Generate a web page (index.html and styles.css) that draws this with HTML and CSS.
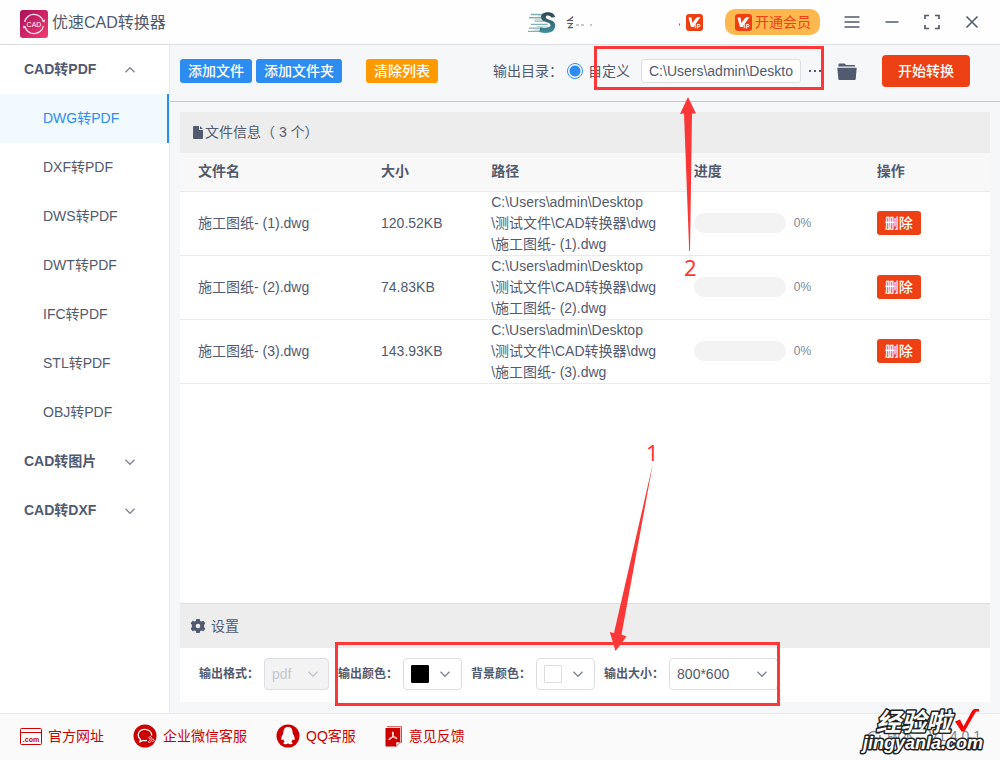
FILE: index.html
```html
<!DOCTYPE html>
<html lang="zh-CN">
<head>
<meta charset="utf-8">
<title>优速CAD转换器</title>
<link rel="stylesheet" href="styles.css">
</head>
<body>
<svg class="defs" aria-hidden="true">
  <defs>
    <symbol id="chevron-down" viewBox="0 0 12 12"><path d="M1.500 3.800 6 8.300l4.500-4.500" fill="none" stroke="currentColor" stroke-width="1.400"/></symbol>
    <symbol id="chevron-up" viewBox="0 0 12 12"><path d="M1.500 8.300 6 3.800l4.500 4.500" fill="none" stroke="currentColor" stroke-width="1.400"/></symbol>
    <symbol id="vip" viewBox="0 0 17 17"><rect width="17" height="17" rx="3" fill="#ee3f12"/><path d="M2.500 3.500h3l.8 5.500L10.500 3.500l4-.5L7.500 13H5z" fill="#fff"/><path d="M9.200 10.200v4M11.300 14.500v-4h1.600a1.100 1.100 0 0 1 0 2.300h-1.400" fill="none" stroke="#fff" stroke-width="1"/></symbol>
  </defs>
</svg>

<header class="titlebar">
  <svg class="logo" viewBox="0 0 28 28" aria-hidden="true">
    <defs><linearGradient id="lg" x1="0" y1="0" x2="1" y2="1"><stop offset="0" stop-color="#a9105a"/><stop offset="1" stop-color="#f33b71"/></linearGradient></defs>
    <rect width="28" height="28" rx="3" fill="url(#lg)"/>
    <path d="M4.600 12A9.500 9.500 0 0 1 23 11M23.400 16A9.500 9.500 0 0 1 5 17" fill="none" stroke="#fff" stroke-opacity=".9" stroke-width="1.300"/>
    <path d="m21.800 11 2.800 1.500.2-3zM6.200 17l-2.800-1.500-.2 3z" fill="#fff"/>
    <text x="14" y="17" class="logo-text">CAD</text>
  </svg>
  <h1 class="app-name">优速CAD转换器</h1>
  <div class="account">
    <svg class="avatar" viewBox="0 0 32 24" aria-hidden="true">
      <defs><linearGradient id="ag" x1="0" y1="0" x2="0" y2="1"><stop offset="0" stop-color="#2b4550"/><stop offset="1" stop-color="#3f929c"/></linearGradient></defs>
      <path d="M3 3.500h14M1 7h14M7 10.500h10M3 14h18M1 18h15M0 21.500h24" stroke="#83afb5" stroke-width="1.500"/>
      <path d="M10 5h7M7 8.500h8M9 16h12M6 20h14" stroke="#b9ced2" stroke-width="1"/>
      <path d="M29 6C27-1 14 0 14 6c0 7 10 4 10 9 0 3-7 3-11 2l-1 5c7 2 17 2 17-7 0-7-10-5-10-9 0-2 5-2 6 1z" fill="url(#ag)"/>
    </svg>
    <span class="member">会</span>
    <svg class="member-rest" viewBox="0 0 108 16" aria-hidden="true"><path d="M3 11h3M8 11h3M17 11h2" stroke="#8a91a0" stroke-width="1"/><path d="M106.500 9.500v2" stroke="#697183"/></svg>
    <svg class="vip" aria-hidden="true"><use href="#vip"/></svg>
  </div>
  <button class="open-vip" type="button"><svg class="vip" aria-hidden="true"><use href="#vip"/></svg>开通会员</button>
  <div class="window-controls">
    <button type="button" aria-label="菜单"><svg viewBox="0 0 16 16"><path d="M.5 3h15M.5 8h15M.5 13h15" stroke="currentColor" stroke-width="1.500"/></svg></button>
    <button type="button" aria-label="最小化"><svg viewBox="0 0 16 16"><path d="M1.500 8h13" stroke="currentColor" stroke-width="1.500"/></svg></button>
    <button type="button" aria-label="最大化"><svg viewBox="0 0 16 16"><path d="M1 5V1.500h4M11 1.500h4V5M15 11v3.500h-4M5 14.500H1V11" fill="none" stroke="currentColor" stroke-width="1.700"/></svg></button>
    <button type="button" aria-label="关闭"><svg viewBox="0 0 16 16"><path d="m2.500 2.500 11 11m0-11-11 11" stroke="currentColor" stroke-width="1.600"/></svg></button>
  </div>
</header>

<div class="body">
  <nav class="sidebar">
    <button class="group" type="button" aria-expanded="true">CAD转PDF<svg class="chevron" aria-hidden="true"><use href="#chevron-up"/></svg></button>
    <a class="item active" href="#dwg">DWG转PDF</a>
    <a class="item" href="#dxf">DXF转PDF</a>
    <a class="item" href="#dws">DWS转PDF</a>
    <a class="item" href="#dwt">DWT转PDF</a>
    <a class="item" href="#ifc">IFC转PDF</a>
    <a class="item" href="#stl">STL转PDF</a>
    <a class="item" href="#obj">OBJ转PDF</a>
    <button class="group" type="button" aria-expanded="false">CAD转图片<svg class="chevron" aria-hidden="true"><use href="#chevron-down"/></svg></button>
    <button class="group" type="button" aria-expanded="false">CAD转DXF<svg class="chevron" aria-hidden="true"><use href="#chevron-down"/></svg></button>
  </nav>

  <main class="main">
    <div class="toolbar">
      <div class="file-actions">
        <button class="btn primary" type="button">添加文件</button>
        <button class="btn primary" type="button">添加文件夹</button>
        <button class="btn warning" type="button">清除列表</button>
      </div>
      <div class="output">
        <span>输出目录：</span>
        <label class="radio"><input type="radio" name="dir" checked>自定义</label>
        <input class="path-input" type="text" aria-label="输出目录" value="C:\Users\admin\Deskto">
        <button class="icon-btn dots" type="button" aria-label="浏览"><svg viewBox="0 0 14 4"><path d="M0 1h2v2H0zM5 1h2v2H5zM10 1h2v2h-2z" fill="currentColor"/></svg></button>
        <button class="icon-btn folder" type="button" aria-label="打开文件夹"><svg viewBox="0 0 20 17"><path d="M1.500 3V1.500Q1.500.5 2.500.5h5l1.500 1.500h8q1 0 1 1v.5h-16.500z" fill="#515a6e"/><path d="M.3 4.700h19.400l-1 11.300q0 1-1 1H2.300q-1 0-1-1z" fill="#515a6e"/></svg></button>
        <button class="btn start" type="button">开始转换</button>
      </div>
    </div>

    <div class="panel">
      <div class="panel-title files-title">
        <svg class="doc-icon" viewBox="0 0 10 13" aria-hidden="true"><path d="M1 0h5v4h4v8q0 1-1 1H1q-1 0-1-1V1q0-1 1-1zM7 0l3 3H7z" fill="#515a6e"/></svg>
        <span>文件信息（ 3 个）</span>
      </div>
      <table class="files">
        <colgroup><col class="c-name"><col class="c-size"><col class="c-path"><col class="c-progress"><col class="c-action"></colgroup>
        <thead><tr><th>文件名</th><th>大小</th><th>路径</th><th>进度</th><th>操作</th></tr></thead>
        <tbody>
          <tr><td>施工图纸- (1).dwg</td><td>120.52KB</td><td>C:\Users\admin\Desktop<br>\测试文件\CAD转换器\dwg<br>\施工图纸- (1).dwg</td><td><div class="progress"><span class="track"></span><span>0%</span></div></td><td><button class="btn delete" type="button">删除</button></td></tr>
          <tr><td>施工图纸- (2).dwg</td><td>74.83KB</td><td>C:\Users\admin\Desktop<br>\测试文件\CAD转换器\dwg<br>\施工图纸- (2).dwg</td><td><div class="progress"><span class="track"></span><span>0%</span></div></td><td><button class="btn delete" type="button">删除</button></td></tr>
          <tr><td>施工图纸- (3).dwg</td><td>143.93KB</td><td>C:\Users\admin\Desktop<br>\测试文件\CAD转换器\dwg<br>\施工图纸- (3).dwg</td><td><div class="progress"><span class="track"></span><span>0%</span></div></td><td><button class="btn delete" type="button">删除</button></td></tr>
        </tbody>
      </table>
      <section class="settings">
        <div class="panel-title settings-title">
          <svg class="gear" viewBox="0 0 16 16" aria-hidden="true"><path fill-rule="evenodd" d="M6.300 1h3.400l.5 2 1.200.6 2-.9 1.900 2.500-1.200 1.700v2.200l1.200 1.700-1.900 2.500-2-.9-1.200.6-.5 2H6.300l-.5-2-1.200-.6-2 .9-1.900-2.500 1.200-1.700V6.900L.7 5.200l1.900-2.500 2 .9L5.800 3zM8 5.700a2.300 2.300 0 1 0 0 4.600 2.300 2.300 0 0 0 0-4.600z" fill="#515a6e"/></svg>
          <span>设置</span>
        </div>
        <div class="settings-row">
          <div class="field"><label for="format">输出格式：</label><span class="select format"><select id="format" disabled><option>pdf</option></select><svg class="chevron" aria-hidden="true"><use href="#chevron-down"/></svg></span></div>
          <div class="field"><label for="fg">输出颜色：</label><button id="fg" class="picker" type="button"><span class="swatch black"></span><svg class="chevron" aria-hidden="true"><use href="#chevron-down"/></svg></button></div>
          <div class="field"><label for="bg">背景颜色：</label><button id="bg" class="picker" type="button"><span class="swatch white"></span><svg class="chevron" aria-hidden="true"><use href="#chevron-down"/></svg></button></div>
          <div class="field"><label for="size">输出大小：</label><span class="select size"><select id="size"><option>800*600</option></select><svg class="chevron" aria-hidden="true"><use href="#chevron-down"/></svg></span></div>
        </div>
      </section>
    </div>
  </main>
</div>

<footer class="footer">
  <a href="#site"><svg class="site-icon" viewBox="0 0 22 17" aria-hidden="true"><rect x=".5" y=".5" width="21" height="16" rx="1" fill="none" stroke="#c00"/><path d="M1 4.500h20" stroke="#c00"/><text x="11" y="13.500" class="com">.com</text></svg>官方网址</a>
  <a href="#wechat"><svg class="round-icon" viewBox="0 0 24 24" aria-hidden="true"><circle cx="12" cy="12" r="11.500" fill="#c00"/><path d="M18.700 11.500C18.700 3.500 5.200 3.500 5.200 11c0 2 1 3.500 2.200 4.300L7 17.800l2.800-1.400q2 .6 4.200 0" fill="none" stroke="#fff" stroke-width="1.300"/><path d="m17.200 12.300 1.500 1.500-1.500 1.500-1.500-1.500zM19.800 14.800l1.500 1.500-1.500 1.500-1.500-1.500zM16.500 16.500l1.200 1.200-1.200 1.200-1.200-1.200z" fill="none" stroke="#fff" stroke-width=".9"/></svg>企业微信客服</a>
  <a href="#qq"><svg class="round-icon" viewBox="0 0 24 24" aria-hidden="true"><circle cx="12" cy="12" r="11.500" fill="#c00"/><path d="M12 3C8.500 3 7.300 5.700 7.300 9.500 6 11.500 5 13.800 5.300 15.500c.2 1 1.200.7 1.900-.4.300 1.300.8 2.100 1.500 2.800-1.700.6-1.700 2 .3 2.300 1.300.2 2.300-.2 3-.9.700.7 1.700 1.100 3 .9 2-.3 2-1.700.3-2.300.7-.7 1.200-1.500 1.500-2.800.7 1.100 1.700 1.400 1.900.4.300-1.700-.7-4-2-6C16.700 5.700 15.500 3 12 3z" fill="#fff"/></svg>QQ客服</a>
  <a href="#feedback"><svg class="pdf-icon" viewBox="0 0 18 21" aria-hidden="true"><path d="M2 .7h14.500V17" fill="none" stroke="#dd4b4b" stroke-width="1"/><path d="M1 2h14.300v14L11 20.500H1q-.5 0-.5-.5V2.500z" fill="#c00"/><path d="M11 20.500V16h4.500z" fill="#fff" stroke="#c00" stroke-width=".6"/><path d="M7.500 6c1.500-.3 1 2.800 0 4.500-1 1.800-2.500 3.500-3.700 3 .2-1.500 3-2.500 5-2.500 2 0 3.500.8 3 1.700-2 .3-5-3.500-4.300-6.700z" fill="none" stroke="#fff" stroke-width="1"/></svg>意见反馈</a>
  <div class="version"><svg viewBox="0 0 16 16" aria-hidden="true"><path d="M2 9a6 6 0 0 1 10-4M14 7a6 6 0 0 1-10 5" fill="none" stroke="currentColor" stroke-width="1.500"/><path d="m9 5.500 5 .5-1-4z" fill="currentColor"/></svg><span>版本：V1.4.0.1</span></div>
</footer>

<div class="markup box-path"></div>
<div class="markup box-size"></div>
<svg class="arrows" viewBox="0 0 1000 760" aria-hidden="true">
  <path d="M688 97l8 16.500h-4L690 251h-.8L684 113.500l-4 .5z"/>
  <path d="M653 463 621.500 634.500l5 2L615.500 651 609.800 632l4.200 1z"/>
  <text x="646" y="461">1</text>
  <text x="684" y="276">2</text>
</svg>
<svg class="watermark" viewBox="0 0 126 50" aria-hidden="true">
  <text x="16" y="25" class="wm-cn">经验啦</text>
  <text x="63" y="43" class="wm-en">jingyanla.com</text>
  <path d="M95 15.500 100 13.500l3.500 7L112 5q1-2 3-2h4v2.500h-3l-11.500 20h-3z" fill="#f00"/>
</svg>
</body>
</html>
```

FILE: styles.css
```css
* { box-sizing: border-box; }

body {
  position: relative;
  display: flex;
  flex-direction: column;
  min-height: 100vh;
  margin: 0;
  background: #f5f7f9;
  color: #515a6e;
  font: 14px/21px "Liberation Sans", "Noto Sans CJK SC", sans-serif;
}

button, input, select { margin: 0; font: inherit; color: inherit; }
button { padding: 0; border: 0; background: none; cursor: pointer; }
a { color: inherit; text-decoration: none; }
svg { display: block; flex: none; }
.defs { position: absolute; width: 0; height: 0; }
.chevron { width: 12px; height: 12px; color: #808695; }

.titlebar {
  display: flex;
  align-items: center;
  height: 45px;
  padding: 0 8px 0 20px;
  border-bottom: 1px solid #dcdde0;
  background: #fefefe;
}
.logo { width: 28px; height: 28px; margin-top: 3px; }
.logo-text { fill: #fff; font-size: 7px; text-anchor: middle; }
.app-name { margin: 0 auto 0 4px; font-size: 16px; font-weight: 400; }
.account { display: flex; align-items: center; margin-right: 22px; }
.avatar { width: 30px; height: 23px; }
.member { width: 7px; height: 21px; margin-left: 8px; overflow: hidden; font-size: 13px; white-space: nowrap; }
.member-rest { width: 108px; height: 16px; margin-right: 5px; }
.vip { width: 17px; height: 17px; }
.open-vip {
  display: flex;
  align-items: center;
  gap: 3px;
  height: 26px;
  padding: 0 9px 0 10px;
  border-radius: 10px;
  background: #ffb84d;
  color: #ed4014;
}
.window-controls { display: flex; margin-left: 12px; }
.window-controls button { display: grid; place-items: center; width: 40px; height: 40px; }
.window-controls svg { width: 16px; height: 16px; }

.body { display: flex; flex: 1; }
.sidebar { width: 170px; flex: none; border-right: 1px solid #e8eaec; background: #fff; }
.group {
  display: flex;
  align-items: center;
  justify-content: space-between;
  width: 100%;
  height: 49px;
  padding: 0 33px 0 24px;
  font-weight: 700;
}
.item { display: flex; align-items: center; height: 49px; padding-left: 43px; }
.item.active { border-right: 2px solid #2d8cf0; background: #f0faff; color: #2d8cf0; }

.main { display: flex; flex: 1; flex-direction: column; min-width: 0; }
.toolbar {
  display: flex;
  align-items: center;
  justify-content: space-between;
  height: 57px;
  padding: 0 30px 4px 10px;
  border-bottom: 1px solid #c5c8ce;
  white-space: nowrap;
}
.file-actions { display: flex; gap: 4px; }
.btn { height: 24px; padding: 0 8px; border-radius: 3px; color: #fff; font-weight: 500; }
.primary { background: #2d8cf0; }
.warning { margin-left: 20px; background: #ff9900; }
.output { display: flex; align-items: center; }
.radio { display: flex; align-items: center; gap: 5px; margin-left: 4px; }
.radio input {
  appearance: none;
  width: 16px;
  height: 16px;
  border: 1px solid #2d8cf0;
  border-radius: 50%;
  background: radial-gradient(circle, #2d8cf0 5px, #fff 6px);
}
.path-input {
  width: 160px;
  height: 24px;
  margin-left: 11px;
  padding: 0 7px;
  border: 1px solid #dcdee2;
  border-radius: 3px;
  background: #fff;
}
.dots { margin-left: 8px; }
.dots svg { width: 14px; height: 4px; }
.folder { margin-left: 14px; }
.folder svg { width: 20px; height: 17px; }
.start, .delete { background: #ed4014; }
.start { height: 32px; margin-left: 25px; padding: 0 16px; border-radius: 4px; }

.panel {
  display: flex;
  flex: 1;
  flex-direction: column;
  margin: 10px 10px 11px;
  background: #fff;
}
.panel-title { display: flex; align-items: center; background: #ededed; }
.files-title { height: 41px; padding-left: 13px; gap: 2px; }
.doc-icon { width: 10px; height: 13px; }

.files { width: 100%; border-collapse: collapse; table-layout: fixed; }
.c-name, .c-progress { width: 22.6%; }
.c-size { width: 13.6%; }
.c-path { width: 25%; }
.files th { height: 38px; padding: 0 18px; background: #f8f8f9; text-align: left; font-weight: 700; }
.files td { height: 64px; padding: 0 0 0 18px; }
.files tr { border-bottom: 1px solid #e8eaec; }
.progress { display: flex; align-items: center; gap: 8px; font-size: 12px; color: #808695; }
.track { width: 92px; height: 20px; border-radius: 10px; background: #f3f3f3; }

.settings { margin-top: auto; border-top: 1px solid #dcdee2; }
.settings-title { height: 44px; padding-left: 10px; gap: 5px; }
.gear { width: 16px; height: 16px; }
.settings-row { display: flex; gap: 9px; padding: 10px 19px 12px; white-space: nowrap; }
.field { display: flex; align-items: center; gap: 5px; font-size: 12px; font-weight: 700; }
.select { position: relative; font-size: 14px; font-weight: 400; }
.select select {
  appearance: none;
  display: block;
  width: 100%;
  height: 32px;
  padding: 0 7px;
  border: 1px solid #dcdee2;
  border-radius: 4px;
  background: #fff;
}
.select select:disabled { background: #f3f3f3; color: #c5c8ce; opacity: 1; }
.select .chevron { position: absolute; top: 10px; right: 10px; pointer-events: none; }
.format .chevron { color: #c5c8ce; }
.format { width: 65px; }
.size { width: 109px; }
.picker {
  display: flex;
  align-items: center;
  justify-content: space-between;
  width: 59px;
  height: 32px;
  padding: 0 10px 0 7px;
  border: 1px solid #dcdee2;
  border-radius: 4px;
  background: #fff;
}
.swatch { width: 18px; height: 18px; border: 1px solid #dcdee2; border-radius: 1px; }
.black { border-color: #000; background: #000; }

.footer {
  display: flex;
  align-items: center;
  gap: 29px;
  height: 47px;
  padding: 0 19px 2px 20px;
  border-top: 1px solid #e8eaec;
  background: #fafafa;
  color: #c00;
}
.footer a { display: flex; align-items: center; gap: 6px; }
.site-icon { width: 22px; height: 17px; }
.com { fill: #c00; font-size: 7px; font-weight: 700; text-anchor: middle; }
.round-icon { width: 24px; height: 24px; }
.pdf-icon { width: 18px; height: 21px; }
.version { display: flex; align-items: center; gap: 5px; margin-left: auto; color: #808695; }
.version svg { width: 16px; height: 16px; }

.markup { position: absolute; border: 3px solid #fc3737; pointer-events: none; }
.box-path { left: 594px; top: 46px; width: 230px; height: 44px; }
.box-size { left: 335px; top: 642px; width: 445px; height: 64px; }
.arrows {
  position: absolute;
  left: 0;
  top: 0;
  width: 1000px;
  height: 760px;
  fill: #fc3737;
  font: 22px "Noto Sans", sans-serif;
  pointer-events: none;
}
.watermark {
  position: absolute;
  right: 14px;
  bottom: 4px;
  width: 126px;
  height: 50px;
  overflow: visible;
  pointer-events: none;
}
.watermark text { fill: #fff; stroke: #222; stroke-width: 3px; stroke-linejoin: round; paint-order: stroke; font-weight: 700; font-style: italic; }
.wm-cn { font-size: 25px; font-family: "Noto Sans CJK SC", sans-serif; }
.watermark .wm-en { font-size: 18px; text-anchor: middle; }
```
